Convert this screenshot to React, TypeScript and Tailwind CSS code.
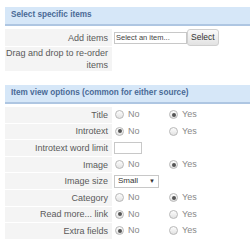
const labelClass =
  "flex w-[107px] shrink-0 items-center justify-end bg-[#f4f4f4] pr-[4px] text-right text-[9px] leading-[12px] text-[#5a5a5a]";

function Radio({ checked, label }: { checked: boolean; label: string }) {
  return (
    <span className="flex items-center gap-[4px]">
      <span className="flex h-[9px] w-[9px] items-center justify-center rounded-full border border-[#b8b8b8] bg-[linear-gradient(#fdfdfd,#e2e2e2)]">
        {checked && <span className="h-[4px] w-[4px] rounded-full bg-[#555]" />}
      </span>
      <span className="text-[9px] text-[#888]">{label}</span>
    </span>
  );
}

function RadioRow({ label, yes }: { label: string; yes: boolean }) {
  return (
    <div className="flex h-[15.6px]">
      <div className={labelClass}>{label}</div>
      <div className="flex items-center pl-[3px]">
        <div className="w-[54px]">
          <Radio checked={!yes} label="No" />
        </div>
        <Radio checked={yes} label="Yes" />
      </div>
    </div>
  );
}

function Header({ title }: { title: string }) {
  return (
    <div className="flex h-[19px] items-center border-b-2 border-[#aec6e2] bg-[#d6e7f8] pl-[6px] text-[8.2px] font-bold text-[#4a6a96]">
      {title}
    </div>
  );
}

export default function App() {
  return (
    <div className="h-[251px] w-[250px] overflow-hidden bg-white pl-[5px] pt-[7px] font-['Liberation_Sans',Arial,sans-serif]">
      <Header title="Select specific items" />
      <div className="mt-[3px] flex flex-col gap-px">
        <div className="flex h-[17px]">
          <div className={labelClass}>Add items</div>
          <div className="flex items-center pl-[2px]">
            <div className="flex h-[12px] w-[73px] items-center border border-[#c8c8c8] bg-white pl-[1px] text-[7.5px] text-[#444]">
              Select an item...
            </div>
            <button className="h-[17px] rounded-[3px] border border-[#cfcfcf] bg-[linear-gradient(#fafafa,#e2e2e2)] px-[3px] text-[8.5px] text-[#333]">
              Select
            </button>
          </div>
        </div>
        <div className="flex h-[24px]">
          <div className={labelClass}>Drag and drop to re-order items</div>
        </div>
      </div>

      <div className="mt-[14px]">
        <Header title="Item view options (common for either source)" />
      </div>
      <div className="mt-[3px] flex flex-col gap-px">
        <RadioRow label="Title" yes />
        <RadioRow label="Introtext" yes={false} />
        <div className="flex h-[15.6px]">
          <div className={labelClass}>Introtext word limit</div>
          <div className="flex items-center pl-[2px]">
            <div className="h-[12px] w-[28px] border border-[#c8c8c8] bg-white" />
          </div>
        </div>
        <RadioRow label="Image" yes />
        <div className="flex h-[15.6px]">
          <div className={labelClass}>Image size</div>
          <div className="flex items-center pl-[2px]">
            <div className="flex h-[13px] w-[45px] items-center justify-between border border-[#c8c8c8] bg-white px-[3px] text-[8px] text-[#333]">
              <span>Small</span>
              <span className="text-[6px]">▼</span>
            </div>
          </div>
        </div>
        <RadioRow label="Category" yes />
        <RadioRow label="Read more... link" yes={false} />
        <RadioRow label="Extra fields" yes={false} />
      </div>
    </div>
  );
}
